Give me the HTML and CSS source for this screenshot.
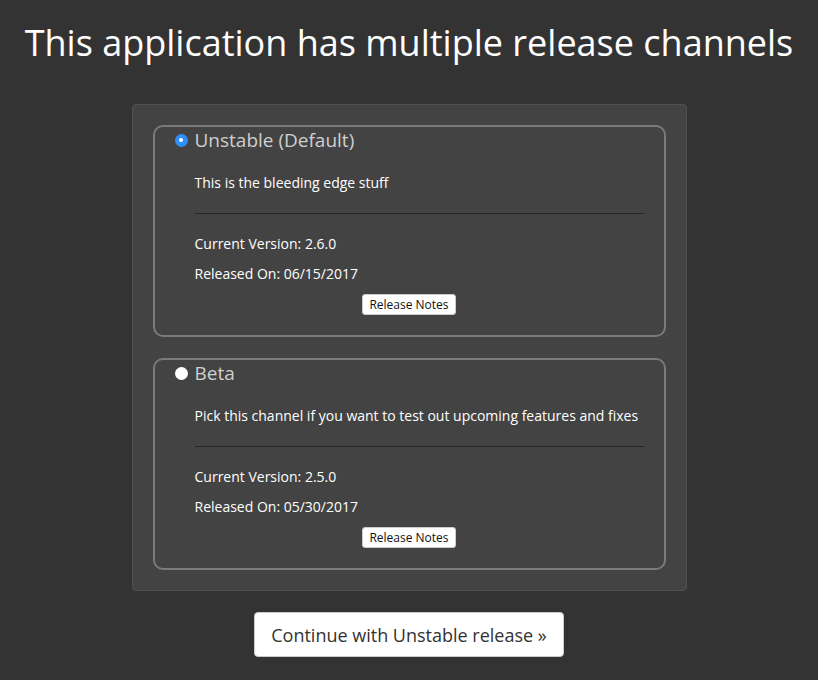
FILE: index.html
```html
<!DOCTYPE html>
<html>
<head>
<meta charset="utf-8">
<link rel="stylesheet" href="styles.css">
</head>
<body>
<h1 class="title">This application has multiple release channels</h1>
<div class="panel">
  <div class="channel">
    <label class="channel-head"><span class="radio radio-on"></span><span class="channel-name">Unstable (Default)</span></label>
    <div class="channel-body">
      <p class="desc">This is the bleeding edge stuff</p>
      <hr class="rule">
      <p class="meta">Current Version: 2.6.0</p>
      <p class="meta meta-second">Released On: 06/15/2017</p>
    </div>
    <div class="notes-row"><button class="notes-btn">Release Notes</button></div>
  </div>
  <div class="channel">
    <label class="channel-head"><span class="radio"></span><span class="channel-name">Beta</span></label>
    <div class="channel-body">
      <p class="desc">Pick this channel if you want to test out upcoming features and fixes</p>
      <hr class="rule">
      <p class="meta">Current Version: 2.5.0</p>
      <p class="meta meta-second">Released On: 05/30/2017</p>
    </div>
    <div class="notes-row"><button class="notes-btn">Release Notes</button></div>
  </div>
</div>
<div class="continue-row"><button class="continue-btn">Continue with Unstable release »</button></div>
</body>
</html>
```
FILE: styles.css
```css
* { box-sizing: border-box; }
html, body {
  margin: 0;
  padding: 0;
  background: #333333;
  font-family: "Open Sans", "Noto Sans", sans-serif;
  color: #ffffff;
}
.title {
  margin: 18px 0 0;
  font-size: 36px;
  line-height: 49px;
  font-weight: 400;
  text-align: center;
  color: #ffffff;
}
.panel {
  width: 555px;
  margin: 37px auto 0;
  padding: 20px;
  background: #434343;
  border: 1px solid #505050;
  border-radius: 4px;
  display: flex;
  flex-direction: column;
  gap: 21px;
}
.channel {
  border: 2px solid #7a7a7a;
  border-radius: 10px;
  padding: 0 20px 20px 20px;
}
.channel-head {
  display: flex;
  align-items: center;
  height: 26px;
}
.radio {
  width: 13px;
  height: 13px;
  border-radius: 50%;
  background: #ffffff;
  margin-right: 7px;
  flex: none;
  position: relative;
}
.radio-on {
  background: #2f8ef7;
}
.radio-on::after {
  content: "";
  position: absolute;
  left: 4.5px;
  top: 4.5px;
  width: 4px;
  height: 4px;
  border-radius: 50%;
  background: #ffffff;
}
.channel-name {
  font-size: 19px;
  line-height: 26px;
  color: #cfcfcf;
}
.channel-body {
  padding-left: 20px;
  padding-top: 20px;
}
.desc, .meta {
  margin: 0;
  font-size: 14px;
  line-height: 20px;
  color: #ffffff;
}
.rule {
  margin: 20px 0 20px;
  border: 0;
  border-top: 1px solid #262626;
  height: 0;
}
.meta-second {
  margin-top: 10px;
}
.notes-row {
  display: flex;
  justify-content: center;
  margin-top: 10px;
}
.notes-btn {
  font-family: "Open Sans", "Noto Sans", sans-serif;
  font-size: 12px;
  height: 21px;
  padding: 0 6px;
  line-height: 19px;
  background: #ffffff;
  color: #111111;
  border: 1px solid #cccccc;
  border-radius: 3px;
}
.continue-row {
  display: flex;
  justify-content: center;
  margin-top: 21px;
}
.continue-btn {
  font-family: "Open Sans", "Noto Sans", sans-serif;
  font-size: 18px;
  height: 45px;
  width: 310px;
  padding: 0;
  background: #ffffff;
  color: #333333;
  border: 1px solid #cccccc;
  border-radius: 4px;
}
```
